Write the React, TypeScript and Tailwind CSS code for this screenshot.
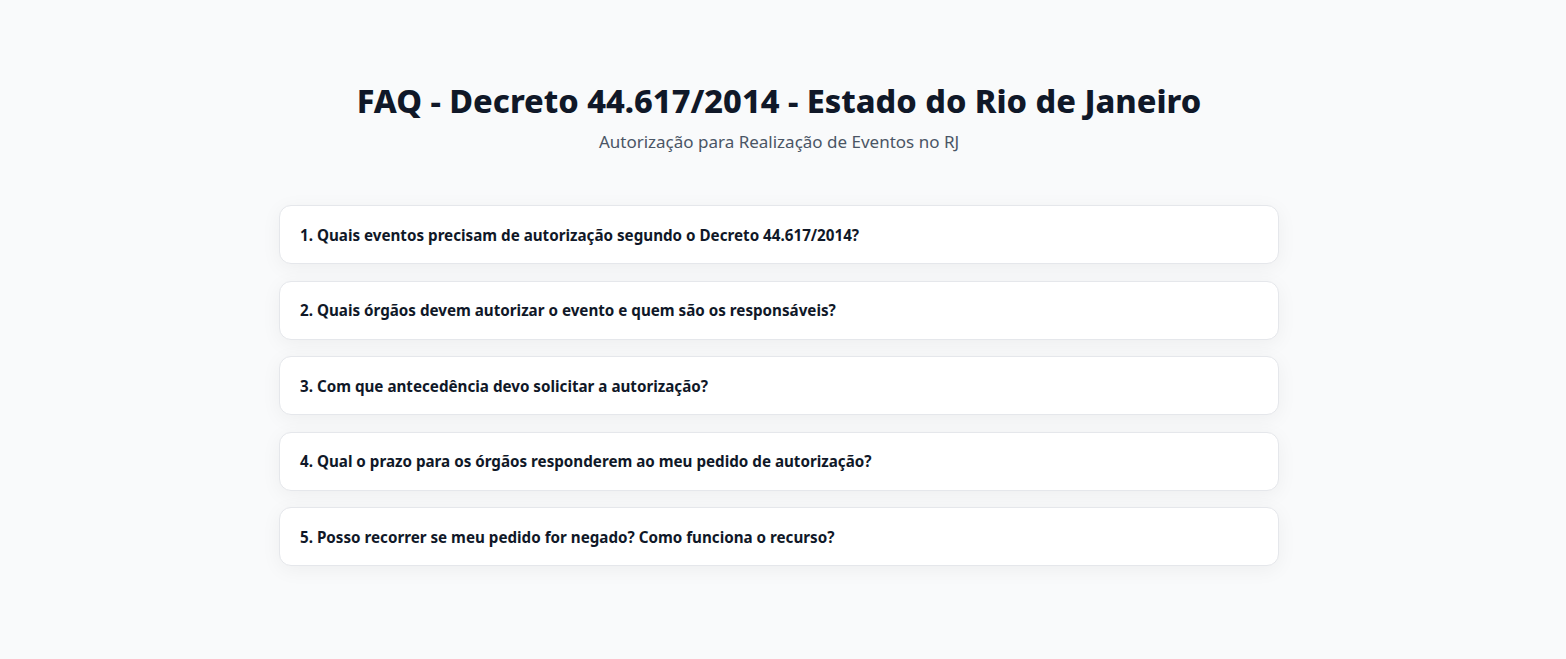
const questions = [
  '1. Quais eventos precisam de autorização segundo o Decreto 44.617/2014?',
  '2. Quais órgãos devem autorizar o evento e quem são os responsáveis?',
  '3. Com que antecedência devo solicitar a autorização?',
  '4. Qual o prazo para os órgãos responderem ao meu pedido de autorização?',
  '5. Posso recorrer se meu pedido for negado? Como funciona o recurso?',
];

export default function App() {
  return (
    <div className="min-h-screen bg-gray-50 pr-2 font-['Noto_Sans',sans-serif]">
      <div className="max-w-[1000px] mx-auto pt-[78px] pb-16">
        <header className="text-center mb-[51px]">
          <h1 className="text-[32.5px] leading-[46px] font-extrabold text-gray-900">
            FAQ - Decreto 44.617/2014 - Estado do Rio de Janeiro
          </h1>
          <p className="mt-[6px] text-[17px] leading-6 text-gray-600">
            Autorização para Realização de Eventos no RJ
          </p>
        </header>
        <div className="flex flex-col gap-[16.5px]">
          {questions.map((q) => (
            <div
              key={q}
              className="bg-white border border-gray-200 rounded-xl shadow-[0_4px_20px_rgba(0,0,0,0.05)]"
            >
              <button className="w-full text-left px-5 py-[16.5px] text-[15.2px] leading-6 font-bold text-gray-900">
                {q}
              </button>
            </div>
          ))}
        </div>
      </div>
    </div>
  );
}
